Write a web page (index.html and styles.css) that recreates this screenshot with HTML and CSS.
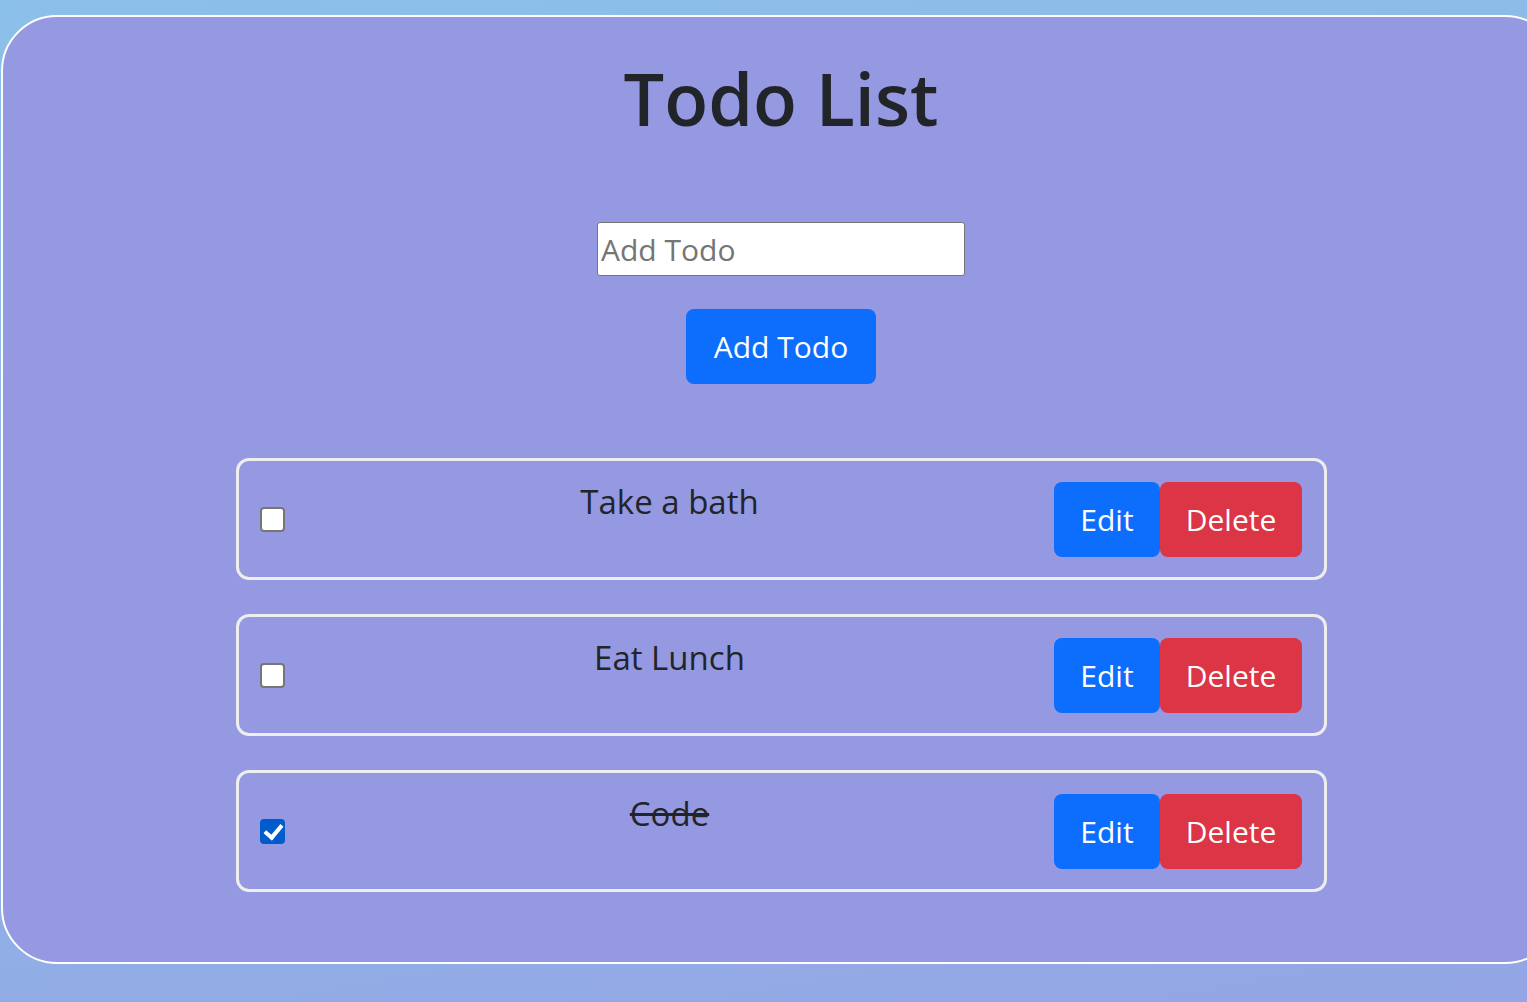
FILE: index.html
```html
<!DOCTYPE html>
<html lang="en">
<head>
<meta charset="utf-8">
<title>Todo List</title>
<link rel="stylesheet" href="styles.css">
</head>
<body>
<div class="card">
  <h1 class="title">Todo List</h1>
  <input class="todo-input" type="text" placeholder="Add Todo">
  <button class="btn btn-primary add-btn">Add Todo</button>
  <ul class="todo-list">
    <li class="todo-item">
      <input class="check" type="checkbox">
      <span class="todo-text">Take a bath</span>
      <div class="actions">
        <button class="btn btn-primary">Edit</button>
        <button class="btn btn-danger">Delete</button>
      </div>
    </li>
    <li class="todo-item">
      <input class="check" type="checkbox">
      <span class="todo-text">Eat Lunch</span>
      <div class="actions">
        <button class="btn btn-primary">Edit</button>
        <button class="btn btn-danger">Delete</button>
      </div>
    </li>
    <li class="todo-item">
      <input class="check" type="checkbox" checked>
      <span class="todo-text done">Code</span>
      <div class="actions">
        <button class="btn btn-primary">Edit</button>
        <button class="btn btn-danger">Delete</button>
      </div>
    </li>
  </ul>
</div>
</body>
</html>
```
FILE: styles.css
```css
html, body {
  margin: 0;
  padding: 0;
}
body {
  min-height: 1002px;
  background: linear-gradient(170deg, #8bc0e9 0%, #8fb3e7 60%, #94a5e4 100%);
  font-family: "Open Sans", "Noto Sans", sans-serif;
  color: #212529;
  overflow: hidden;
}
.card {
  box-sizing: border-box;
  width: 1560px;
  height: 949px;
  margin: 15px 0 0 1px;
  border: 2px solid #ffffff;
  border-radius: 56px;
  background: #9599e1;
  display: flex;
  flex-direction: column;
  align-items: center;
}
.title {
  margin: 33px 0 0;
  height: 96px;
  font-size: 72px;
  line-height: 96px;
  font-weight: 600;
  color: #212529;
}
.todo-input {
  box-sizing: border-box;
  margin-top: 76px;
  width: 368px;
  height: 54px;
  border: 1px solid #767676;
  border-radius: 3px;
  padding: 0 3px;
  font-family: inherit;
  font-size: 30px;
  color: #212529;
  background: #fff;
}
.todo-input::placeholder {
  color: #757575;
}
.btn {
  box-sizing: border-box;
  height: 75px;
  border: 0;
  border-radius: 8px;
  font-family: inherit;
  font-size: 30px;
  color: #fff;
  padding: 0 25px;
}
.btn-primary { background: #0d6efd; }
.btn-danger { background: #dc3545; }
.add-btn {
  margin-top: 33px;
  width: 190px;
  padding: 0;
}
.todo-list {
  list-style: none;
  margin: 74px 0 0 1px;
  padding: 0;
  width: 1091px;
  display: flex;
  flex-direction: column;
  gap: 34px;
}
.todo-item {
  box-sizing: border-box;
  height: 122px;
  border: 3px solid #eeeeee;
  border-radius: 13px;
  padding: 20px 22px 20px 21px;
  display: flex;
  align-items: center;
}
.check {
  appearance: none;
  -webkit-appearance: none;
  margin: 0;
  width: 25px;
  height: 25px;
  box-sizing: border-box;
  border: 2px solid #767676;
  border-radius: 4px;
  background: #fff;
  position: relative;
  flex: none;
}
.check:checked {
  background: #005ccc;
  border-color: #005ccc;
}
.check:checked::after {
  content: "";
  position: absolute;
  left: 6px;
  top: 0px;
  width: 7px;
  height: 14px;
  border: solid #fff;
  border-width: 0 4px 4px 0;
  transform: rotate(40deg);
}
.todo-text {
  flex: 1;
  align-self: flex-start;
  text-align: center;
  font-size: 33px;
  line-height: 42px;
}
.todo-text.done {
  text-decoration: line-through;
}
.actions {
  display: flex;
}
.actions .btn-primary { width: 106px; padding: 0; }
.actions .btn-danger { width: 142px; padding: 0; }
```
